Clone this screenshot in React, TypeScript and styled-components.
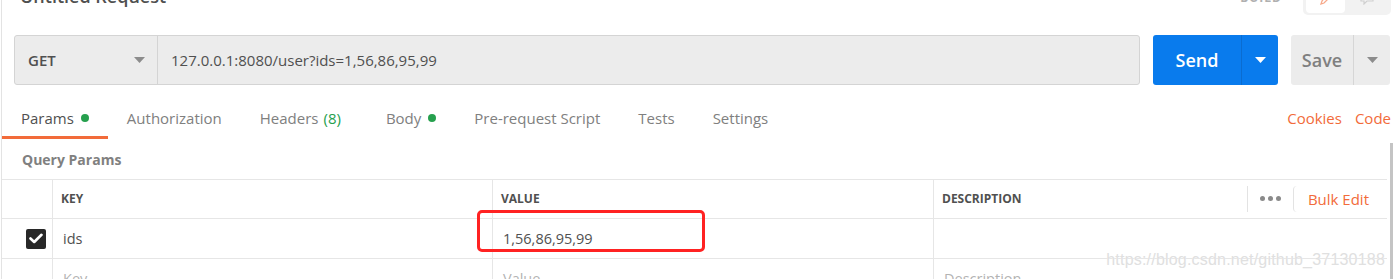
import styled, { createGlobalStyle } from 'styled-components';

const GlobalStyle = createGlobalStyle`
  html, body {
    margin: 0;
    padding: 0;
    background: #ffffff;
    overflow: hidden;
  }
  body {
    font-family: "Open Sans", "Noto Sans", sans-serif;
    color: #505050;
  }
`;

const Pane = styled.div`
  position: relative;
  height: 279px;
  margin-left: 1px;
  border-left: 1px solid #e3e3e3;
  overflow: hidden;
`;

const TitleBar = styled.div`
  display: flex;
  justify-content: space-between;
  align-items: flex-start;
  height: 35px;
  padding: 0 3px 0 18px;
`;

const Title = styled.div`
  margin-top: -16px;
  font-size: 18px;
  line-height: 24px;
  font-weight: 600;
  color: #505050;
`;

const TitleTools = styled.div`
  display: flex;
  align-items: flex-start;
  gap: 21px;
`;

const BuildLabel = styled.div`
  margin-top: -10px;
  font-size: 12px;
  line-height: 16px;
  font-weight: 700;
  letter-spacing: 1px;
  color: #b0b0b0;
`;

const ModeSwitch = styled.div`
  display: flex;
  width: 88px;
  height: 15px;
  padding: 0 3px 2px;
  box-sizing: border-box;
  background: #f2f2f2;
  border-radius: 0 0 5px 5px;
`;

const ModeTab = styled.div<{ $active?: boolean }>`
  display: flex;
  justify-content: center;
  align-items: flex-start;
  width: 39px;
  height: 13px;
  overflow: hidden;
  background: ${(p) => (p.$active ? '#ffffff' : 'transparent')};
  border-radius: 0 0 4px 4px;
  & + & {
    flex: 1;
  }
`;

const UrlRow = styled.div`
  display: flex;
  gap: 13px;
  height: 50px;
  padding: 0 4px 0 12px;
`;

const UrlGroup = styled.div`
  flex: 1;
  display: flex;
  background: #ececec;
  border: 1px solid #d4d4d4;
  border-radius: 3px;
`;

const MethodSelect = styled.div`
  display: flex;
  align-items: center;
  justify-content: space-between;
  width: 143px;
  padding: 0 12px 0 13px;
  box-sizing: border-box;
  border-right: 1px solid #d4d4d4;
  font-size: 15px;
  font-weight: 600;
  color: #505050;
`;

const UrlText = styled.div`
  display: flex;
  align-items: center;
  padding-left: 13px;
  font-size: 15px;
  color: #505050;
`;

const SplitButton = styled.div<{ $primary?: boolean; $width: number }>`
  display: flex;
  width: ${(p) => p.$width}px;
  border-radius: 3px;
  background: ${(p) => (p.$primary ? '#097bed' : '#ececec')};
  color: ${(p) => (p.$primary ? '#ffffff' : '#808080')};
  font-size: 18px;
  font-weight: 600;
`;

const SplitMain = styled.div<{ $primary?: boolean }>`
  flex: 1;
  display: flex;
  align-items: center;
  justify-content: center;
  border-right: 1px solid ${(p) => (p.$primary ? '#0a6cd0' : '#d6d6d6')};
`;

const SplitCaret = styled.div`
  display: flex;
  align-items: center;
  justify-content: center;
  width: 36px;
`;

const TabsRow = styled.div`
  display: flex;
  justify-content: space-between;
  align-items: stretch;
  height: 54px;
  padding-right: 3px;
`;

const TabList = styled.div`
  display: flex;
  align-items: stretch;
`;

const Tab = styled.div<{ $active?: boolean }>`
  display: flex;
  align-items: center;
  gap: 7px;
  padding: 14px 19px 0;
  font-size: 15px;
  color: ${(p) => (p.$active ? '#505050' : '#808080')};
  border-bottom: 3px solid ${(p) => (p.$active ? '#f26b3a' : 'transparent')};
`;

const Dot = styled.span`
  width: 8px;
  height: 8px;
  border-radius: 50%;
  background: #26a04e;
`;

const Count = styled.span`
  margin-left: -2px;
  margin-right: 7px;
  color: #26a04e;
`;

const LinkList = styled.div`
  display: flex;
  align-items: center;
  gap: 13px;
  padding-top: 14px;
  padding-bottom: 3px;
  font-size: 15px;
  color: #f26b3a;
`;

const SectionTitle = styled.div`
  height: 40px;
  display: flex;
  align-items: center;
  padding: 0 0 0 20px;
  font-size: 14px;
  font-weight: 700;
  color: #808080;
`;

const Table = styled.div`
  position: relative;
  display: grid;
  grid-template-columns: 50px 440px 441px 1fr;
  grid-template-rows: 39px 40px 40px;
  margin-right: 7px;
  border-top: 1px solid #e6e6e6;
`;

const Cell = styled.div<{ $first?: boolean }>`
  position: relative;
  display: flex;
  align-items: center;
  padding-left: ${(p) => (p.$first ? '0' : '8px')};
  border-left: ${(p) => (p.$first ? 'none' : '1px solid #e6e6e6')};
  border-bottom: 1px solid #e6e6e6;
  font-size: 14.5px;
  color: #505050;
`;

const HeadCell = styled(Cell)`
  font-size: 12px;
  font-weight: 700;
  color: #505050;
  padding-bottom: 1px;
`;

const CheckCell = styled(Cell)`
  justify-content: flex-end;
  padding-right: 6px;
`;

const Placeholder = styled.span`
  color: #b3b3b3;
  padding-left: 2px;
`;

const RowValue = styled.span`
  padding-left: 2px;
`;

const HeadActions = styled.div`
  margin-left: auto;
  display: flex;
  align-items: center;
  height: 26px;
`;

const MoreButton = styled.div`
  display: flex;
  align-items: center;
  justify-content: center;
  gap: 3px;
  width: 45px;
  height: 100%;
  border-left: 1px solid #e3e3e3;
  & span {
    width: 5px;
    height: 5px;
    border-radius: 50%;
    background: #8a8a8a;
  }
`;

const BulkEdit = styled.div`
  display: flex;
  align-items: center;
  height: 100%;
  padding: 0 18px 0 14px;
  border-left: 1px solid #e3e3e3;
  border-radius: 4px 0 0 4px;
  font-size: 15px;
  font-weight: 400;
  color: #f26b3a;
`;

const CheckBox = styled.div`
  display: flex;
  align-items: center;
  justify-content: center;
  width: 20px;
  height: 20px;
  border-radius: 2px;
  background: #282828;
`;

const Annotation = styled.div`
  position: absolute;
  left: -16px;
  top: -9px;
  width: 228px;
  height: 42px;
  box-sizing: border-box;
  border: 3px solid #ff2222;
  border-radius: 5px;
  pointer-events: none;
`;

const Watermark = styled.div`
  position: absolute;
  right: 9px;
  top: 251px;
  font-family: "Liberation Sans", Arial, sans-serif;
  font-size: 16px;
  color: #e0e0e0;
  text-shadow: 0 0 1px #ffffff;
  letter-spacing: 0.2px;
`;

const ScrollBar = styled.div`
  position: absolute;
  right: 1px;
  top: 143px;
  bottom: 0;
  width: 3px;
  background: #c4c4c4;
`;

const Caret = ({ color }: { color: string }) => (
  <svg width="11" height="6" viewBox="0 0 11 6">
    <path d="M0 0 L11 0 L5.5 6 Z" fill={color} />
  </svg>
);

const Pencil = () => (
  <svg width="14" height="14" viewBox="0 0 14 14" style={{ marginTop: -8 }}>
    <path d="M9 1 L12 4 L5 11 L2 12 L3 9 Z" fill="none" stroke="#f7a98a" strokeWidth="1.3" />
  </svg>
);

const Bubble = () => (
  <svg width="16" height="14" viewBox="0 0 16 14" style={{ marginTop: -9 }}>
    <path d="M2 2 H14 V10 H8 L5 13 V10 H2 Z" fill="none" stroke="#d0d0d0" strokeWidth="1.2" />
  </svg>
);

const Check = () => (
  <svg width="14" height="11" viewBox="0 0 14 11">
    <path d="M1.5 5.5 L5.2 9 L12.5 1.8" fill="none" stroke="#ffffff" strokeWidth="2.6" strokeLinecap="round" strokeLinejoin="round" />
  </svg>
);

const tabs = [
  { label: 'Params', dot: true, active: true },
  { label: 'Authorization' },
  { label: 'Headers', count: '(8)' },
  { label: 'Body', dot: true },
  { label: 'Pre-request Script' },
  { label: 'Tests' },
  { label: 'Settings' },
];

export default function App() {
  return (
    <>
      <GlobalStyle />
      <Pane>
        <TitleBar>
          <Title>Untitled Request</Title>
          <TitleTools>
            <BuildLabel>BUILD</BuildLabel>
            <ModeSwitch>
              <ModeTab $active>
                <Pencil />
              </ModeTab>
              <ModeTab>
                <Bubble />
              </ModeTab>
            </ModeSwitch>
          </TitleTools>
        </TitleBar>

        <UrlRow>
          <UrlGroup>
            <MethodSelect>
              GET
              <Caret color="#8c8c8c" />
            </MethodSelect>
            <UrlText>127.0.0.1:8080/user?ids=1,56,86,95,99</UrlText>
          </UrlGroup>
          <SplitButton $primary $width={125}>
            <SplitMain $primary>Send</SplitMain>
            <SplitCaret>
              <Caret color="#ffffff" />
            </SplitCaret>
          </SplitButton>
          <SplitButton $width={99}>
            <SplitMain>Save</SplitMain>
            <SplitCaret>
              <Caret color="#8c8c8c" />
            </SplitCaret>
          </SplitButton>
        </UrlRow>

        <TabsRow>
          <TabList>
            {tabs.map((t) => (
              <Tab key={t.label} $active={t.active}>
                {t.label}
                {t.count && <Count>{t.count}</Count>}
                {t.dot && <Dot />}
              </Tab>
            ))}
          </TabList>
          <LinkList>
            <span>Cookies</span>
            <span>Code</span>
          </LinkList>
        </TabsRow>

        <SectionTitle>Query Params</SectionTitle>

        <Table>
          <HeadCell $first />
          <HeadCell>KEY</HeadCell>
          <HeadCell>VALUE</HeadCell>
          <HeadCell>
            DESCRIPTION
            <HeadActions>
              <MoreButton>
                <span />
                <span />
                <span />
              </MoreButton>
              <BulkEdit>Bulk Edit</BulkEdit>
            </HeadActions>
          </HeadCell>

          <CheckCell $first>
            <CheckBox>
              <Check />
            </CheckBox>
          </CheckCell>
          <Cell>
            <RowValue>ids</RowValue>
          </Cell>
          <Cell>
            <RowValue>1,56,86,95,99</RowValue>
            <Annotation />
          </Cell>
          <Cell />

          <Cell $first />
          <Cell>
            <Placeholder>Key</Placeholder>
          </Cell>
          <Cell>
            <Placeholder>Value</Placeholder>
          </Cell>
          <Cell>
            <Placeholder>Description</Placeholder>
          </Cell>
        </Table>

        <Watermark>https://blog.csdn.net/github_37130188</Watermark>
        <ScrollBar />
      </Pane>
    </>
  );
}
